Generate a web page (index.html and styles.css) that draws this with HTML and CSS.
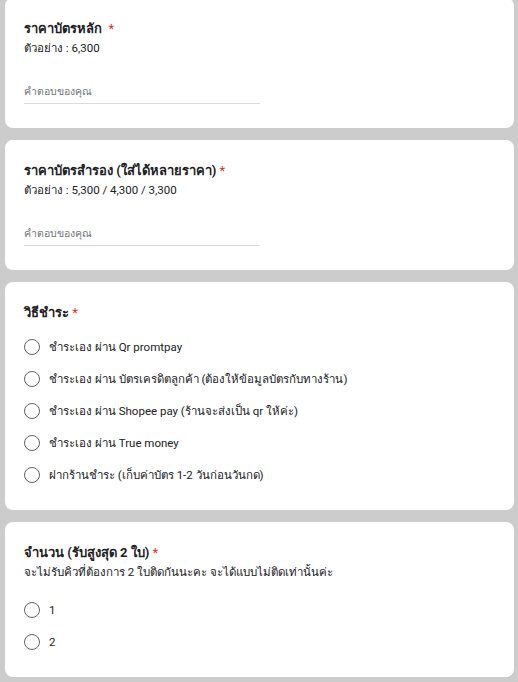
FILE: index.html
```html
<!DOCTYPE html>
<html lang="th">
<head>
    <meta charset="UTF-8">
    <meta name="viewport" content="width=device-width, initial-scale=1.0">
    <title>แบบฟอร์ม</title>
    <link rel="stylesheet" href="styles.css">
</head>
<body>
    <div class="container">

        <div class="card">
            <div class="title">ราคาบัตรหลัก&nbsp; <span class="req">*</span></div>
            <div class="desc">ตัวอย่าง : 6,300</div>
            <div class="answer">คำตอบของคุณ</div>
        </div>

        <div class="card">
            <div class="title">ราคาบัตรสำรอง (ใส่ได้หลายราคา) <span class="req">*</span></div>
            <div class="desc">ตัวอย่าง : 5,300 / 4,300 / 3,300</div>
            <div class="answer">คำตอบของคุณ</div>
        </div>

        <div class="card">
            <div class="title">วิธีชำระ <span class="req">*</span></div>
            <div class="options">
                <div class="option"><span class="radio"></span>ชำระเอง ผ่าน Qr promtpay</div>
                <div class="option"><span class="radio"></span>ชำระเอง ผ่าน บัตรเครดิตลูกค้า (ต้องให้ข้อมูลบัตรกับทางร้าน)</div>
                <div class="option"><span class="radio"></span>ชำระเอง ผ่าน Shopee pay (ร้านจะส่งเป็น qr ให้ค่ะ)</div>
                <div class="option"><span class="radio"></span>ชำระเอง ผ่าน True money</div>
                <div class="option"><span class="radio"></span>ฝากร้านชำระ (เก็บค่าบัตร 1-2 วันก่อนวันกด)</div>
            </div>
        </div>

        <div class="card">
            <div class="title">จำนวน (รับสูงสุด 2 ใบ) <span class="req">*</span></div>
            <div class="desc">จะไม่รับคิวที่ต้องการ 2 ใบติดกันนะคะ จะได้แบบไม่ติดเท่านั้นค่ะ</div>
            <div class="options">
                <div class="option"><span class="radio"></span>1</div>
                <div class="option"><span class="radio"></span>2</div>
            </div>
        </div>

    </div>
</body>
</html>
```

FILE: styles.css
```css
*{
    box-sizing: border-box;
}

body{
    margin: 0;
    background-color: #cccccc;
    font-family: Roboto, "Noto Sans", "DejaVu Sans", sans-serif;
    color: #202124;
}

.container{
    display: flex;
    flex-direction: column;
    gap: 12px;
    margin-top: -2px;
    padding: 0 4px 0 5px;
}

.card{
    background-color: #fff;
    border-radius: 8px;
    padding: 21px 19px 24px;
}

.title{
    font-size: 13px;
    font-weight: bold;
    line-height: 20px;
}

.req{
    color: #d93025;
    font-weight: normal;
}

.desc{
    font-size: 11.5px;
    line-height: 18px;
    padding-bottom: 5px;
}

.answer{
    width: 236px;
    margin-top: 21px;
    font-size: 10.5px;
    line-height: 18px;
    padding-bottom: 2px;
    color: #70757a;
    border-bottom: 1px solid #dadce0;
}

.options{
    margin-top: 8px;
    margin-bottom: -5px;
}

.option{
    display: flex;
    align-items: center;
    height: 32px;
    font-size: 11.5px;
}

.radio{
    width: 16px;
    height: 16px;
    border: 1.5px solid #5f6368;
    border-radius: 50%;
    margin-right: 9px;
    flex-shrink: 0;
}
```
